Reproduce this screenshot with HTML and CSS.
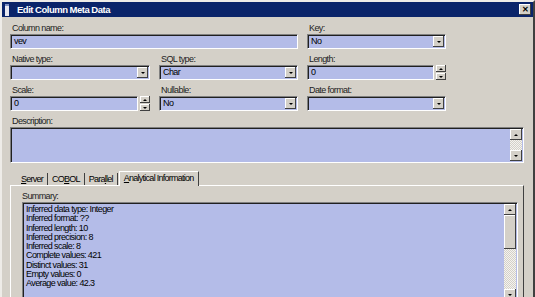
FILE: index.html
```html
<!DOCTYPE html>
<html lang="en">
<head>
    <meta charset="UTF-8">
    <title>Edit Column Meta Data</title>
    <link rel="stylesheet" href="styles.css">
</head>
<body>
<div class="window">
    <div class="titlebar">
        <span class="app-icon"></span>
        <span class="title">Edit Column Meta Data</span>
        <span class="close-btn">&#x2715;</span>
    </div>

    <div class="form">
        <div class="field span2">
            <label>Column name:</label>
            <div class="field-box text-box">vev</div>
        </div>
        <div class="field">
            <label>Key:</label>
            <div class="field-box combo">No<span class="drop-btn"></span></div>
        </div>

        <div class="field">
            <label>Native type:</label>
            <div class="field-box combo"><span class="drop-btn"></span></div>
        </div>
        <div class="field">
            <label>SQL type:</label>
            <div class="field-box combo">Char<span class="drop-btn"></span></div>
        </div>
        <div class="field">
            <label>Length:</label>
            <div class="spin-row">
                <div class="field-box text-box">0</div>
                <div class="spinner"><span class="spin up"></span><span class="spin down"></span></div>
            </div>
        </div>

        <div class="field">
            <label>Scale:</label>
            <div class="spin-row">
                <div class="field-box text-box">0</div>
                <div class="spinner"><span class="spin up"></span><span class="spin down"></span></div>
            </div>
        </div>
        <div class="field">
            <label>Nullable:</label>
            <div class="field-box combo">No<span class="drop-btn"></span></div>
        </div>
        <div class="field">
            <label>Date format:</label>
            <div class="field-box combo"><span class="drop-btn"></span></div>
        </div>

        <div class="field span-all">
            <label>Description:</label>
            <div class="field-box memo">
                <div class="scrollbar">
                    <span class="sb-btn up"></span>
                    <span class="sb-track"></span>
                    <span class="sb-btn down"></span>
                </div>
            </div>
        </div>
    </div>

    <div class="tabs">
        <span class="tab"><u>S</u>erver</span>
        <span class="tab">CO<u>B</u>OL</span>
        <span class="tab">Para<u>l</u>lel</span>
        <span class="tab active"><u>A</u>nalytical Information</span>
    </div>
    <div class="tab-panel">
        <label class="summary-label">Summary:</label>
        <div class="field-box listbox">
            <ul class="lines">
                <li>Inferred data type: Integer</li>
                <li>Inferred format: ??</li>
                <li>Inferred length: 10</li>
                <li>Inferred precision: 8</li>
                <li>Inferred scale: 8</li>
                <li>Complete values: 421</li>
                <li>Distinct values: 31</li>
                <li>Empty values: 0</li>
                <li>Average value: 42.3</li>
            </ul>
            <div class="scrollbar">
                <span class="sb-btn up"></span>
                <span class="sb-thumb"></span>
                <span class="sb-track"></span>
                <span class="sb-btn down"></span>
            </div>
        </div>
    </div>
</div>
</body>
</html>
```

FILE: styles.css
```css
body {
    margin: 0;
    font-family: "Liberation Sans", Arial, sans-serif;
    font-size: 9px;
    letter-spacing: -0.6px;
    color: #000;
    background: #d4d0c8;
    overflow: hidden;
}
.window {
    width: 535px;
    height: 297px;
    box-sizing: border-box;
    background: #d4d0c8;
    border-left: 2px solid #eeece8;
    border-top: 2px solid #eeece8;
    border-right: 2px solid #404040;
    overflow: hidden;
}
.titlebar {
    height: 15px;
    background: #0a246a;
    display: flex;
    align-items: center;
    color: #fff;
}
.app-icon {
    width: 4px;
    height: 10px;
    margin-left: 3px;
    background: #e8e8f0;
    border-top: 2px solid #8090c0;
}
.title {
    font-weight: bold;
    font-size: 9.5px;
    letter-spacing: -0.5px;
    margin-left: 8px;
    flex: 1;
}
.close-btn {
    width: 12px;
    height: 11px;
    margin-right: 2px;
    background: #d4d0c8;
    color: #000;
    font-size: 8px;
    font-weight: bold;
    line-height: 11px;
    letter-spacing: 0;
    text-align: center;
    box-shadow: inset -1px -1px #404040, inset 1px 1px #fff;
}

.form {
    display: grid;
    grid-template-columns: 140px 139px 139px 1fr;
    column-gap: 9px;
    row-gap: 5px;
    padding: 6px 10px 0 8px;
}
.field label {
    display: block;
    height: 10px;
    line-height: 10px;
    margin: 0 0 1px 2px;
    color: #222;
}
.span2 {
    grid-column: span 2;
}
.span-all {
    grid-column: 1 / -1;
    margin-right: -1px;
}
.form .field:nth-child(2) {
    grid-column: 3;
}
.form .field:nth-child(2) + .field {
    grid-column: 1;
}
.form .field:nth-child(5) + .field {
    grid-column: 1;
}

.field-box {
    position: relative;
    box-sizing: border-box;
    height: 15px;
    background: #b4bce8;
    border-top: 1px solid #808080;
    border-left: 1px solid #808080;
    border-right: 1px solid #fff;
    border-bottom: 1px solid #fff;
    box-shadow: inset 1px 1px #202020;
    padding: 0 3px;
    line-height: 13px;
}
.spin-row {
    display: flex;
    gap: 2px;
}
.spin-row .text-box {
    flex: 1;
}
.spinner {
    width: 10px;
    display: flex;
    flex-direction: column;
    gap: 1px;
}
.spin {
    flex: 1;
    background: #d4d0c8;
    box-shadow: inset -1px -1px #404040, inset 1px 1px #fff;
    position: relative;
}
.spin::after, .drop-btn::after, .sb-btn::after {
    content: "";
    position: absolute;
    left: 50%;
    top: 50%;
    border-left: 2px solid transparent;
    border-right: 2px solid transparent;
    transform: translate(-50%, -50%);
}
.spin.up::after, .sb-btn.up::after {
    border-bottom: 2px solid #000;
}
.spin.down::after, .drop-btn::after, .sb-btn.down::after {
    border-top: 2px solid #000;
}
.drop-btn {
    position: absolute;
    right: 1px;
    top: 1px;
    width: 11px;
    height: 11px;
    background: #d4d0c8;
    box-shadow: inset -1px -1px #404040, inset 1px 1px #fff;
}
.memo {
    height: 36px;
}

.scrollbar {
    position: absolute;
    right: 1px;
    top: 1px;
    bottom: 1px;
    width: 12px;
    display: flex;
    flex-direction: column;
}
.sb-btn {
    position: relative;
    height: 11px;
    background: #d4d0c8;
    box-shadow: inset -1px -1px #404040, inset 1px 1px #fff;
}
.sb-track {
    flex: 1;
    background-color: #ebe9e4;
    background-image: repeating-conic-gradient(#d4d0c8 0 25%, #f4f3f0 0 50%);
    background-size: 2px 2px;
}
.sb-thumb {
    height: 34px;
    background: #d4d0c8;
    box-shadow: inset -1px -1px #404040, inset 1px 1px #fff;
}

.tabs {
    display: flex;
    margin: 6px 0 0 15px;
    height: 16px;
    align-items: flex-end;
    letter-spacing: -0.75px;
}
.tab {
    padding: 0 4px 0 3px;
    height: 12px;
    line-height: 12px;
    border-right: 1px solid #404040;
    margin-right: 1px;
}
.tab:first-child {
    padding-left: 4px;
}
.tab.active {
    height: 15px;
    line-height: 13px;
    background: #d4d0c8;
    border-left: 1px solid #fff;
    border-top: 1px solid #fff;
    box-sizing: border-box;
    padding: 0 5px 0 4px;
    position: relative;
    top: 1px;
}
.tab-panel {
    margin: 0 9px 0 8px;
    height: 120px;
    border-top: 1px solid #fff;
    border-left: 1px solid #fff;
    border-right: 1px solid #404040;
    padding: 5px 5px 0 11px;
}
.summary-label {
    display: block;
    height: 10px;
    line-height: 10px;
    margin-bottom: 1px;
    color: #222;
}
.listbox {
    height: 100px;
    padding: 1px 3px;
}
.lines {
    list-style: none;
    margin: 0;
    padding: 1px 0 0;
}
.lines li {
    height: 9.3px;
    line-height: 9.3px;
    white-space: nowrap;
}
```
